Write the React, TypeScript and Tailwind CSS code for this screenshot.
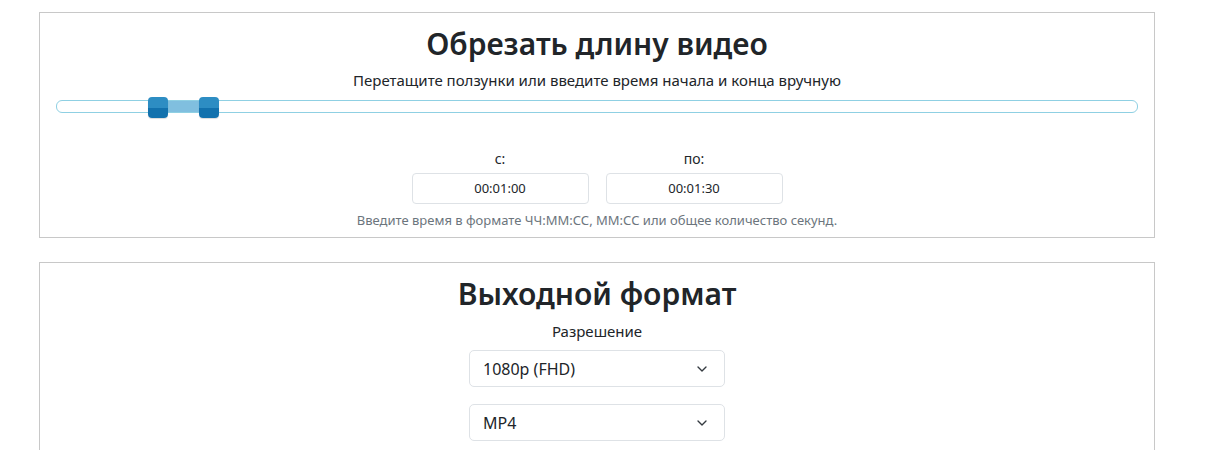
import { ChevronDown } from "lucide-react"

const font = { fontFamily: '"Noto Sans", "Open Sans", sans-serif' }

function Handle({ left }: { left: number }) {
  return (
    <div
      className="absolute top-[-4px] h-[21px] w-[20px] overflow-hidden rounded-[4px] shadow-[0_1px_1px_rgba(0,0,0,0.15)]"
      style={{ left }}
    >
      <div className="h-1/2 bg-[#2d8dc3]" />
      <div className="h-1/2 bg-[#1271ad]" />
    </div>
  )
}

function Select({ value }: { value: string }) {
  return (
    <div className="flex h-[37px] w-[256px] items-center justify-between rounded-[5px] border border-[#dee2e6] bg-white pl-[13px] pr-[14px] text-[16px] text-[#212529]">
      <span>{value}</span>
      <ChevronDown className="h-4 w-4 text-[#343a40]" strokeWidth={2} />
    </div>
  )
}

function TimeField({ label, value }: { label: string; value: string }) {
  return (
    <div className="flex flex-col items-center">
      <span className="text-[14px] leading-[20px]">{label}</span>
      <div className="mt-[4px] flex h-[31px] w-[177px] items-center justify-center rounded-[4px] border border-[#dee2e6] text-[13px]">
        {value}
      </div>
    </div>
  )
}

export default function App() {
  return (
    <div className="min-h-[450px] bg-white pl-[39px] pt-[12px] text-[#212529]" style={font}>
      <div className="w-[1116px] border border-[#c8c8c8] px-4 pb-[8px] pt-[12px]">
        <h2 className="text-center text-[30px] font-semibold leading-[38px]">Обрезать длину видео</h2>
        <p className="mt-[7px] text-center text-[15px] leading-[20px]">
          Перетащите ползунки или введите время начала и конца вручную
        </p>
        <div className="relative mt-[10px] h-[13px] w-[1082px] rounded-[6px] border border-[#8fd0e3] bg-white">
          <div className="absolute left-[104px] top-0 h-full w-[40px] bg-[#80bfdf]" />
          <Handle left={91} />
          <Handle left={142} />
        </div>
        <div className="mt-[36px] flex justify-center gap-[17px]">
          <TimeField label="с:" value="00:01:00" />
          <TimeField label="по:" value="00:01:30" />
        </div>
        <p className="mt-[7px] text-center text-[13px] leading-[18px] text-[#6c757d]">
          Введите время в формате ЧЧ:ММ:СС, ММ:СС или общее количество секунд.
        </p>
      </div>

      <div className="mt-[24px] w-[1116px] border border-[#c8c8c8] px-4 pb-[10px] pt-[12px]">
        <h2 className="text-center text-[30px] font-semibold leading-[38px]">Выходной формат</h2>
        <p className="mt-[8px] text-center text-[15px] leading-[20px]">Разрешение</p>
        <div className="mt-[9px] flex flex-col items-center gap-[17px]">
          <Select value="1080p (FHD)" />
          <Select value="MP4" />
        </div>
      </div>
    </div>
  )
}
